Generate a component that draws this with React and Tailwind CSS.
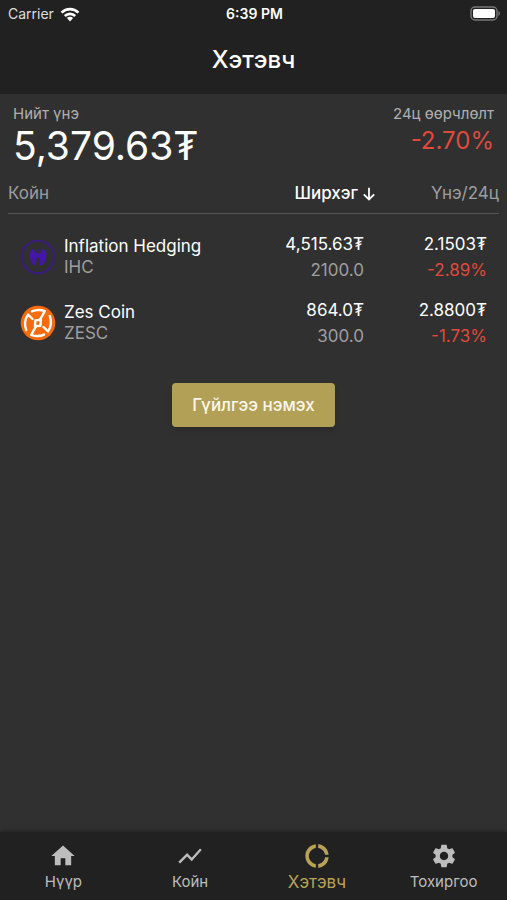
import React from "react";
import { MdHome, MdShowChart, MdDonutLarge, MdSettings } from "react-icons/md";

function WifiIcon() {
  return (
    <svg viewBox="0 0 20 15" className="h-[15px] w-5" fill="none" stroke="#fff" strokeWidth="2.6" aria-hidden="true">
      <path d="M1.6 5.6a12 12 0 0 1 16.8 0" />
      <path d="M4.8 9a7.4 7.4 0 0 1 10.4 0" />
      <path d="M10 14.4 6.9 11.1a4.4 4.4 0 0 1 6.2 0z" fill="#fff" stroke="none" />
    </svg>
  );
}

function BatteryIcon() {
  return (
    <svg viewBox="0 0 32 16" className="h-4 w-8" aria-hidden="true">
      <rect x="2" y="1" width="26" height="13" rx="4" fill="none" stroke="#777" strokeWidth="1.4" />
      <rect x="4" y="3" width="22" height="9" rx="2" fill="#fff" />
      <path d="M29.4 5.1c2 .8 2 4 0 4.8z" fill="#777" />
    </svg>
  );
}

function IhcLogo() {
  return (
    <svg viewBox="0 0 36 36" className="size-9 shrink-0" aria-hidden="true">
      <circle cx="18" cy="18" r="16.2" fill="none" stroke="#3a1b80" strokeWidth="2" />
      <path
        d="M13 9.500C10.600 11.500 9.400 14 9.600 17c.2 3.600 1.800 6.800 4.600 9.500l1.800-.6.4-6.400c.6-1.200 2.600-1.200 3.200 0l.4 6.400 1.800.6c2.800-2.700 4.400-5.900 4.600-9.500.2-3-1-5.500-3.400-7.500l-2.800 4.700h-4.400z"
        fill="#4517a8"
      />
      <circle cx="18" cy="11" r="1.500" fill="#3a1b80" />
    </svg>
  );
}

function ZescLogo() {
  return (
    <svg viewBox="0 0 36 36" className="size-9 shrink-0" fill="none" aria-hidden="true">
      <circle cx="18" cy="18" r="17.3" fill="#f96a0a" />
      <g stroke="#fff" strokeWidth="2.4" strokeLinejoin="round" strokeLinecap="round">
        <path d="M12 6.400Q18 3.600 24.800 6.200L19.800 15" />
        <path d="M24 29.600Q18 32.400 11.200 29.800L16.200 21" />
        <path d="M12.500 14 8 9.600Q3.200 16.500 6.200 25" />
        <path d="M23.500 22 28 26.400Q32.800 19.500 29.800 11" />
        <path d="M15.400 15.400l5.500-.6-.5 6-5.500.6z" />
      </g>
    </svg>
  );
}

const coins = [
  { name: "Inflation Hedging", symbol: "IHC", Logo: IhcLogo, value: "4,515.63₮", amount: "2100.0", price: "2.1503₮", change: "-2.89%" },
  { name: "Zes Coin", symbol: "ZESC", Logo: ZescLogo, value: "864.0₮", amount: "300.0", price: "2.8800₮", change: "-1.73%" },
];

const tabs = [
  { label: "Нүүр", Icon: MdHome },
  { label: "Койн", Icon: MdShowChart },
  { label: "Хэтэвч", Icon: MdDonutLarge, active: true },
  { label: "Тохиргоо", Icon: MdSettings },
];

export default function App() {
  return (
    <div className="flex min-h-screen flex-col bg-[#303030] font-['Inter','Noto_Sans',sans-serif] text-white">
      <header className="bg-[#212121]">
        <div className="grid h-7 grid-cols-3 items-center pr-1.5 pl-2 text-sm">
          <div className="flex items-center gap-1.5 text-[#dedede]">
            Carrier
            <WifiIcon />
          </div>
          <div className="text-center font-semibold">6:39 PM</div>
          <div className="flex justify-end">
            <BatteryIcon />
          </div>
        </div>
        <h1 className="pt-4 pb-[18px] text-center text-2xl font-medium">Хэтэвч</h1>
      </header>

      <main className="flex-1">
        <section className="flex justify-between px-[13px] pt-2.5">
          <div>
            <div className="text-[15px] leading-5 text-[#b0b0b0]">Нийт үнэ</div>
            <div className="text-[39px] leading-11">5,379.63₮</div>
          </div>
          <div className="text-right">
            <div className="text-[15px] leading-5 text-[#b0b0b0]">24ц өөрчлөлт</div>
            <div className="text-2xl leading-[34px] text-[#df4a3c]">-2.70%</div>
          </div>
        </section>

        <div className="px-2">
          <table className="w-full table-fixed border-separate border-spacing-0 text-[17px]">
            <colgroup>
              <col />
              <col className="w-32" />
              <col className="w-[123px]" />
            </colgroup>
            <thead>
              <tr className="h-[46px] text-[#9e9e9e]">
                <th scope="col" className="border-b border-[#555] pt-1.5 text-left font-normal">Койн</th>
                <th scope="col" className="border-b border-[#555] pt-1.5 font-normal text-white">
                  <button type="button" className="ml-auto flex items-center gap-1 font-medium">
                    Ширхэг
                    <svg viewBox="0 0 14 14" className="size-3.5" fill="none" stroke="currentColor" strokeWidth="1.8" aria-hidden="true">
                      <path d="M7 .8v11.600M1.800 7.300 7 12.500l5.200-5.200" />
                    </svg>
                  </button>
                </th>
                <th scope="col" className="border-b border-[#555] pt-1.5 text-right font-normal">Үнэ/24ц</th>
              </tr>
            </thead>
            <tbody>
              <tr className="h-2.5" aria-hidden="true">
                <td colSpan={3} />
              </tr>
              {coins.map(({ name, symbol, Logo, value, amount, price, change }) => (
                <tr key={symbol} className="h-[66px]">
                  <td className="pl-3">
                    <div className="flex items-center gap-2">
                      <Logo />
                      <div className="leading-[21px] whitespace-nowrap">
                        <div>{name}</div>
                        <div className="text-[#9e9e9e]">{symbol}</div>
                      </div>
                    </div>
                  </td>
                  <td className="pr-3 text-right leading-[26px]">
                    <div>{value}</div>
                    <div className="text-[#9e9e9e]">{amount}</div>
                  </td>
                  <td className="pr-3 text-right leading-[26px]">
                    <div>{price}</div>
                    <div className="text-[#df4a3c]">{change}</div>
                  </td>
                </tr>
              ))}
            </tbody>
          </table>
        </div>

        <div className="flex justify-center pt-[27px]">
          <button type="button" className="h-11 rounded bg-[#b3a057] px-5 pt-1 pb-0.5 text-[17px] font-medium text-[#fbf7ea] shadow-md">
            Гүйлгээ нэмэх
          </button>
        </div>
      </main>

      <nav className="grid h-[68px] grid-cols-4 bg-[#212121] shadow-[0_-1px_4px_rgba(0,0,0,0.3)]">
        {tabs.map(({ label, Icon, active }) => (
          <a
            key={label}
            href="#"
            aria-current={active ? "page" : undefined}
            className={
              active
                ? "flex flex-col items-center pt-2.5 text-[17px] leading-6 text-[#b9a255]"
                : "flex flex-col items-center pt-2.5 text-[15px] leading-6 text-[#bdbdbd]"
            }
          >
            <Icon className="size-7" />
            <span>{label}</span>
          </a>
        ))}
      </nav>
    </div>
  );
}
